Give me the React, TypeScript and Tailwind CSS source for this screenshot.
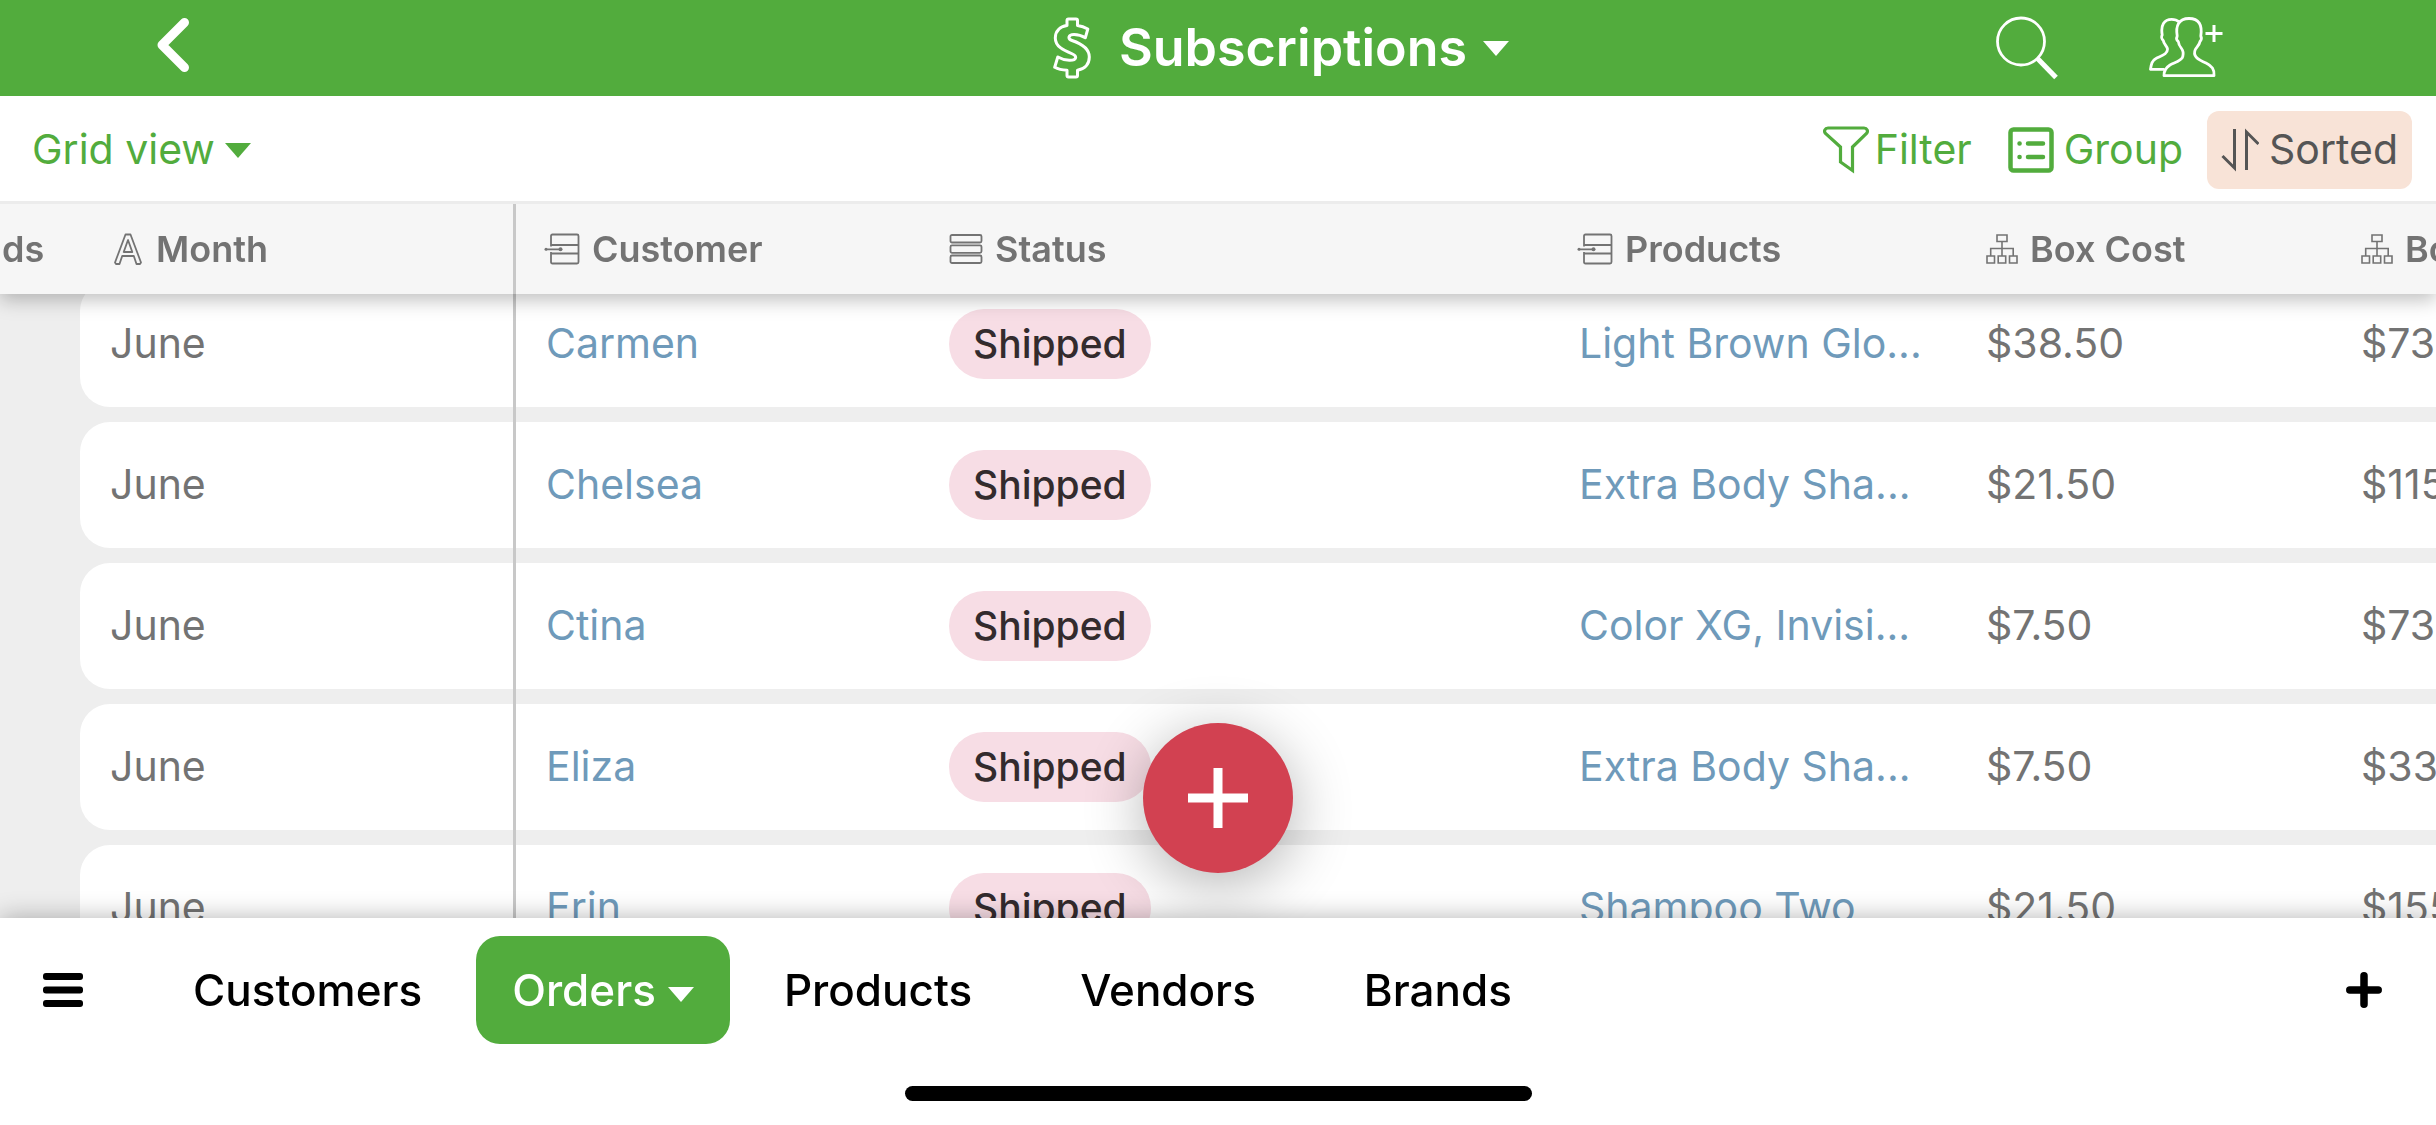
import React, { useLayoutEffect, useRef, useState } from 'react';

type ColumnKey = 'month' | 'customer' | 'status' | 'products' | 'boxCost' | 'extra';

interface Column {
  key: ColumnKey;
  label: string;
  icon: React.ElementType;
}

interface Order {
  month: string;
  customer: string;
  status: string;
  products: string;
  boxCost: string;
  extra: string;
}

const Caret = () => (
  <svg className="w-[26px] h-[15px] shrink-0" viewBox="0 0 26 15" fill="currentColor" aria-hidden="true">
    <path d="M0 0h26L13 15z" />
  </svg>
);

const BackIcon = () => (
  <svg className="w-8 h-[54px]" viewBox="0 0 32 54" fill="none" stroke="currentColor" strokeWidth="9" strokeLinecap="round" strokeLinejoin="round">
    <path d="M27.500 4.500 5 27l22.500 22.500" />
  </svg>
);

const DollarIcon = () => (
  <svg className="w-[38px] h-[62px]" viewBox="0 0 38 62" fill="none" stroke="currentColor" strokeWidth="3" strokeLinejoin="round" aria-hidden="true">
    <path d="M15.500 2h7.500q1.500 0 1.500 1.500V8.500Q30 9.300 34.800 12L32.300 20.800Q27 17.500 21 17.500C15 17.500 14.500 22 19 23.500C28 26.500 36.300 31 36.300 40C36.300 47.500 31.500 52 24.500 53.200V58.500q0 1.500-1.500 1.500h-7.500q-1.500 0-1.500-1.500V53.300Q6.500 53 1.700 50.300L4.800 40Q11 43.500 17 43.300C24 43.200 24 39 19.500 37C10 33 2.300 29.500 2.300 21C2.300 14 7 9.500 14 8.500V3.500q0-1.500 1.500-1.500z" />
  </svg>
);

const SearchIcon = () => (
  <svg className="w-[63px] h-[64px]" viewBox="0 0 63 64" fill="none" stroke="currentColor" aria-hidden="true">
    <circle cx="25" cy="25.500" r="23.500" strokeWidth="2.800" />
    <path d="M41.500 42.500 60 61.500" strokeWidth="5" />
  </svg>
);

const AddPeopleIcon = () => (
  <svg className="w-[74px] h-[62px]" viewBox="0 0 74 62" fill="none" stroke="currentColor" strokeWidth="2.800" strokeLinejoin="round" aria-hidden="true">
    <path d="M15 58.700C14.800 55 15.500 51.500 21 48C27 45 33 43.500 33.800 39.500C34.500 36.500 34.500 34 32.500 31.500C30.500 29 29.500 27 29.300 24.500C27.300 23 27.500 20.500 28.200 19C26.500 9 29.500 1.500 40 1.500C50 1.500 53.500 8 51.800 19C52.800 21 52 23.500 51 24.500C50.500 28 47.500 30 46.300 32.500C45 35.500 45.500 38 47 39.800C49 43 53 44 57 46C63 49 65.500 52 65 58.700z" />
    <path d="M30.300 5C28 3 25.500 2.300 22.700 2.300C15 2.300 11.500 8 13.200 18C12 20 13 22.500 14.300 23.500C14.800 27.500 18 29 18.500 32C18.700 37 13 38.500 7 41.500C3 43.500 2.300 47 1.500 52.300H15.500" />
    <path d="M65 8v17M56.500 16.500h17" strokeWidth="3" />
  </svg>
);

const FilterIcon = () => (
  <svg className="w-[46px] h-[48px]" viewBox="0 0 46 48" fill="none" stroke="currentColor" strokeWidth="3.200" aria-hidden="true">
    <path d="M5 2h36c3 0 4.500 3 2.500 5.500L29.500 21v23.500L17.500 36V21L2.500 7.500C.5 5 2 2 5 2z" />
  </svg>
);

const GroupIcon = () => (
  <svg className="w-[46px] h-[46px]" viewBox="0 0 46 46" fill="none" stroke="currentColor" strokeWidth="4.500" strokeLinecap="round" aria-hidden="true">
    <rect x="2.500" y="2.500" width="41" height="41" rx="3" />
    <path d="M11.500 16.500h.1M11.500 30h.1M20 16.500h15M20 30h15" />
  </svg>
);

const SortIcon = () => (
  <svg className="w-[38px] h-[44px]" viewBox="0 0 38 44" fill="none" stroke="currentColor" strokeWidth="3" aria-hidden="true">
    <path d="M13.500 1v39L1.500 28M25.500 42V4l12 12" />
  </svg>
);

const TextFieldIcon = () => (
  <svg className="w-[32px] h-[32px] shrink-0" viewBox="-2 0 32 32" fill="none" stroke="currentColor" strokeWidth="1.800" strokeLinejoin="round">
    <path d="M11.500 1.500h5L27 29.500l-1 1.500h-3.500L19.800 23H8.200L5.500 31H2L1 29.500zM14 7l-4.300 12h8.600z" />
  </svg>
);

const LinkFieldIcon = () => (
  <svg className="w-[36px] h-[32px] shrink-0 -ml-0.5" viewBox="0 0 36 32" fill="none" stroke="currentColor" strokeWidth="1.800">
    <path d="M7 13.500V3q0-1.500 1.500-1.500H33q1.500 0 1.500 1.500v26q0 1.500-1.500 1.500H8.500Q7 30.500 7 29V19M7 12h27.500M7 20.500h27.500M2 16.300h14" />
    <circle cx="2" cy="16.300" r="1.500" fill="currentColor" stroke="none" />
    <circle cx="16.500" cy="16.300" r="2" fill="currentColor" stroke="none" />
  </svg>
);

const SelectFieldIcon = () => (
  <svg className="w-[34px] h-[30px] shrink-0" viewBox="0 0 34 30" fill="none" stroke="currentColor" strokeWidth="1.800">
    <rect x="1.500" y="1" width="31" height="7.500" rx="1.500" />
    <rect x="1.500" y="11.300" width="31" height="7.500" rx="1.500" />
    <rect x="1.500" y="21.500" width="31" height="7.500" rx="1.500" />
  </svg>
);

const RollupFieldIcon = () => (
  <svg className="w-[32px] h-[30px] shrink-0" viewBox="0 0 32 30" fill="none" stroke="currentColor" strokeWidth="1.600">
    <path d="M11 1h10v6.500H11zM1 22h7.500v7H1zM12.200 22h7.500v7h-7.500zM23.500 22H31v7h-7.500zM16 7.500V22M4.700 22v-7.500h22.500V22" />
  </svg>
);

const columns: Column[] = [
  { key: 'month', label: 'Month', icon: TextFieldIcon },
  { key: 'customer', label: 'Customer', icon: LinkFieldIcon },
  { key: 'status', label: 'Status', icon: SelectFieldIcon },
  { key: 'products', label: 'Products', icon: LinkFieldIcon },
  { key: 'boxCost', label: 'Box Cost', icon: RollupFieldIcon },
  { key: 'extra', label: 'Bo', icon: RollupFieldIcon }
];

const orders: Order[] = [
  { month: 'June', customer: 'Carmen', status: 'Shipped', products: 'Light Brown Glo...', boxCost: '$38.50', extra: '$73' },
  { month: 'June', customer: 'Chelsea', status: 'Shipped', products: 'Extra Body Sha...', boxCost: '$21.50', extra: '$115' },
  { month: 'June', customer: 'Ctina', status: 'Shipped', products: 'Color XG, Invisi...', boxCost: '$7.50', extra: '$73' },
  { month: 'June', customer: 'Eliza', status: 'Shipped', products: 'Extra Body Sha...', boxCost: '$7.50', extra: '$33' },
  { month: 'June', customer: 'Erin', status: 'Shipped', products: 'Shampoo Two', boxCost: '$21.50', extra: '$155' }
];

const tabs = ['Customers', 'Orders', 'Products', 'Vendors', 'Brands'];

const Cell: React.FC<{ column: ColumnKey; order: Order }> = ({ column, order }) => {
  const value = order[column];
  if (column === 'status') {
    return (
      <span className="flex items-center h-[70px] px-6 rounded-full bg-[#f7dde5] text-[39px] text-[#332b2d] font-medium">
        {value}
      </span>
    );
  }
  if (column === 'customer' || column === 'products') {
    return <a href="#record" className="text-[#6f9aba]">{value}</a>;
  }
  return <span>{value}</span>;
};

const OrdersGrid = () => {
  const scroller = useRef<HTMLDivElement>(null);

  // the list opens slightly scrolled so the first row tucks under the header
  useLayoutEffect(() => {
    if (scroller.current) scroller.current.scrollTop = 13;
  }, []);

  return (
    <div ref={scroller} className="h-full overflow-auto [scrollbar-width:none]">
      <table className="w-full table-fixed border-separate border-spacing-0">
        <colgroup>
          <col className="w-[80px]" />
          <col className="w-[436px]" />
          <col className="w-[403px]" />
          <col className="w-[630px]" />
          <col className="w-[407px]" />
          <col className="w-[375px]" />
          <col />
        </colgroup>
        <thead className="sticky top-0 z-10 bg-[#f6f6f6] text-[#737373] shadow-[0_6px_18px_rgba(0,0,0,0.25)]">
          <tr className="h-[90px]">
            <th className="p-0 pl-0.5 text-left text-[36px] font-semibold">ds</th>
            {columns.map((column) => {
              const Icon = column.icon;
              return (
                <th
                  key={column.key}
                  className={`p-0 text-[36px] font-semibold ${column.key === 'month' ? 'border-r-[3px] border-[#c8c8c8]' : ''}`}
                >
                  <div className={`flex items-center gap-3 whitespace-nowrap ${column.key === 'month' ? 'pl-8' : 'pl-[30px]'}`}>
                    <Icon />
                    {column.label}
                  </div>
                </th>
              );
            })}
          </tr>
        </thead>
        <tbody>
          {orders.map((order) => (
            <tr key={order.customer}>
              <td className="p-0" />
              {columns.map((column) => (
                <td
                  key={column.key}
                  className={`p-0 pb-[15px] ${column.key === 'month' ? 'border-r-[3px] border-[#c8c8c8]' : ''}`}
                >
                  <div
                    className={`flex items-center h-[126px] pl-[30px] bg-white text-[41px] text-[#737373] whitespace-nowrap ${
                      column.key === 'month' ? 'rounded-l-[30px]' : ''
                    }`}
                  >
                    <Cell column={column.key} order={order} />
                  </div>
                </td>
              ))}
            </tr>
          ))}
        </tbody>
      </table>
    </div>
  );
};

const App: React.FC = () => {
  const [activeTab, setActiveTab] = useState('Orders');

  return (
    <div className="flex flex-col h-screen overflow-hidden bg-white font-['Inter',sans-serif]">
      <header className="grid grid-cols-[1fr_auto_1fr] items-center h-24 shrink-0 pl-[126px] bg-[#52ac3d] text-white">
        <button aria-label="Back" className="justify-self-start pl-[31px] pb-1.5">
          <BackIcon />
        </button>
        <button className="flex items-center text-[52px] font-semibold">
          <DollarIcon />
          <span className="pl-7 pr-4">Subscriptions</span>
          <Caret />
        </button>
        <div className="flex items-center gap-[90px] justify-self-end pr-[213px]">
          <button aria-label="Search"><SearchIcon /></button>
          <button aria-label="Add people"><AddPeopleIcon /></button>
        </div>
      </header>

      <div className="flex items-center justify-between shrink-0 pt-[15px] pb-3 pl-8 pr-6 border-b-[3px] border-[#ececec] text-[41px] text-[#52ac3d]">
        <button className="flex items-center gap-2.5">
          Grid view
          <Caret />
        </button>
        <div className="flex items-center">
          <button className="flex items-center gap-1.5 pr-9">
            <FilterIcon />
            Filter
          </button>
          <button className="flex items-center gap-2.5 pr-6">
            <GroupIcon />
            Group
          </button>
          <button className="flex items-center gap-2.5 h-[78px] px-3.5 rounded-xl bg-[#f8e3d7] text-[#555555]">
            <SortIcon />
            Sorted
          </button>
        </div>
      </div>

      <main className="relative flex-1 min-h-0 bg-[#eeeeee]">
        <OrdersGrid />
        <button
          aria-label="Add record"
          className="absolute z-10 bottom-[45px] left-1/2 -translate-x-1/2 flex items-center justify-center w-[150px] h-[150px] rounded-full bg-[#d24151] text-white shadow-[0_12px_60px_rgba(0,0,0,0.3)]"
        >
          <svg className="w-[60px] h-[60px]" viewBox="0 0 60 60" stroke="currentColor" strokeWidth="9">
            <path d="M30 0v60M0 30h60" />
          </svg>
        </button>
      </main>

      <footer className="relative z-20 flex flex-col items-center shrink-0 pt-[18px] pb-6 bg-white shadow-[0_0_24px_rgba(0,0,0,0.3)]">
        <nav className="flex items-center w-full pl-[43px] pr-[54px] text-[44px] font-medium text-black">
          <button aria-label="Menu" className="pr-14">
            <svg className="w-[40px] h-[34px]" viewBox="0 0 40 34" fill="currentColor">
              <rect width="40" height="7" rx="3" />
              <rect y="13.500" width="40" height="7" rx="3" />
              <rect y="27" width="40" height="7" rx="3" />
            </svg>
          </button>
          {tabs.map((tab) => (
            <button
              key={tab}
              onClick={() => setActiveTab(tab)}
              className={`flex items-center h-[108px] ${
                tab === activeTab ? 'gap-3 px-9 rounded-3xl bg-[#52ac3d] text-white' : 'px-[54px]'
              }`}
            >
              {tab}
              {tab === activeTab && <span className="pt-2"><Caret /></span>}
            </button>
          ))}
          <button aria-label="Add table" className="ml-auto">
            <svg className="w-9 h-9" viewBox="0 0 36 36" stroke="currentColor" strokeWidth="7.500" strokeLinecap="round">
              <path d="M18 3.800v28.400M3.800 18h28.400" />
            </svg>
          </button>
        </nav>
        <div className="w-[627px] h-[15px] mt-[42px] rounded-full bg-black" />
      </footer>
    </div>
  );
};

export default App;
